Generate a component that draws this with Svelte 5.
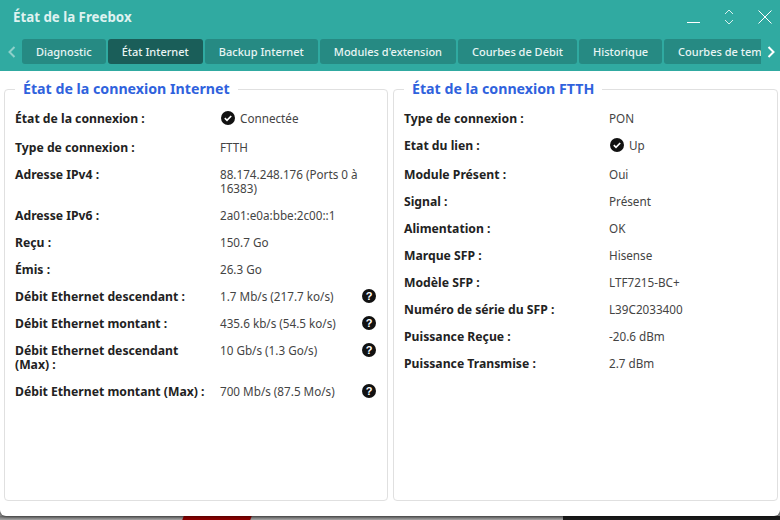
<script>
  const tabs = ['Diagnostic', 'État Internet', 'Backup Internet', "Modules d'extension", 'Courbes de Débit', 'Historique', 'Courbes de température'];
  const left = [
    { k: 'État de la connexion :', v: 'Connectée', check: true },
    { k: 'Type de connexion :', v: 'FTTH' },
    { k: 'Adresse IPv4 :', v: '88.174.248.176 (Ports 0 à 16383)' },
    { k: 'Adresse IPv6 :', v: '2a01:e0a:bbe:2c00::1' },
    { k: 'Reçu :', v: '150.7 Go' },
    { k: 'Émis :', v: '26.3 Go' },
    { k: 'Débit Ethernet descendant :', v: '1.7 Mb/s (217.7 ko/s)', help: true },
    { k: 'Débit Ethernet montant :', v: '435.6 kb/s (54.5 ko/s)', help: true },
    { k: 'Débit Ethernet descendant (Max) :', v: '10 Gb/s (1.3 Go/s)', help: true },
    { k: 'Débit Ethernet montant (Max) :', v: '700 Mb/s (87.5 Mo/s)', help: true }
  ];
  const right = [
    { k: 'Type de connexion :', v: 'PON' },
    { k: 'Etat du lien :', v: 'Up', check: true },
    { k: 'Module Présent :', v: 'Oui' },
    { k: 'Signal :', v: 'Présent' },
    { k: 'Alimentation :', v: 'OK' },
    { k: 'Marque SFP :', v: 'Hisense' },
    { k: 'Modèle SFP :', v: 'LTF7215-BC+' },
    { k: 'Numéro de série du SFP :', v: 'L39C2033400' },
    { k: 'Puissance Reçue :', v: '-20.6 dBm' },
    { k: 'Puissance Transmise :', v: '2.7 dBm' }
  ];
  const panels = [
    { title: 'État de la connexion Internet', rows: left },
    { title: 'État de la connexion FTTH', rows: right }
  ];
</script>

<div class="page">
  <div class="backdrop">
    <span class="red"></span>
    <span class="dark"></span>
  </div>
  <div class="window">
    <header>
      <div class="titlebar">
        <span class="title">État de la Freebox</span>
        <div class="controls">
          <svg width="14" height="14" viewBox="0 0 14 14"><path d="M1 12.5H14" stroke="#fff" fill="none"/></svg>
          <svg width="10" height="16" viewBox="0 0 10 16"><path d="M1 5L5 1L9 5M1 11L5 15L9 11" stroke="#d8f0ee" fill="none"/></svg>
          <svg width="14" height="14" viewBox="0 0 14 14"><path d="M.5 .5L13.5 13.5M13.5 .5L.5 13.5" stroke="#fff" fill="none"/></svg>
        </div>
      </div>
      <div class="tabbar">
        <svg class="arrow" width="8" height="12" viewBox="0 0 8 12"><path d="M6.5 1L1.5 6L6.5 11" stroke="#8fd0ca" stroke-width="2" fill="none"/></svg>
        <div class="tabs">
          {#each tabs as t, i}
            <div class="tab" class:active={i === 1}>{t}</div>
          {/each}
        </div>
        <svg class="arrow" width="8" height="12" viewBox="0 0 8 12"><path d="M1.5 1L6.5 6L1.5 11" stroke="#fff" stroke-width="2" fill="none"/></svg>
      </div>
    </header>
    <main>
      {#each panels as p}
        <fieldset>
          <legend>{p.title}</legend>
          {#each p.rows as r}
            <div class="row" class:tall={r.check}>
              <div class="key">{r.k}</div>
              <div class="val">
                {#if r.check}
                  <svg class="ic" width="14" height="14" viewBox="0 0 14 14"><circle cx="7" cy="7" r="7" fill="#111"/><path d="M3.8 7.2L6 9.3L10.2 5" stroke="#fff" stroke-width="1.7" fill="none"/></svg>
                {/if}
                <span>{r.v}</span>
              </div>
              {#if r.help}
                <svg class="help" width="14" height="14" viewBox="0 0 14 14"><circle cx="7" cy="7" r="7" fill="#111"/><text x="7" y="11" text-anchor="middle" class="q">?</text></svg>
              {/if}
            </div>
          {/each}
        </fieldset>
      {/each}
    </main>
  </div>
</div>

<style>
  :global(body) { margin: 0; background: #8d8d8d; }
  .page {
    position: relative;
    width: 780px;
    height: 520px;
    overflow: hidden;
    font-family: "Noto Sans", "DejaVu Sans", sans-serif;
    font-size: 12px;
    color: #333;
  }
  .backdrop { position: absolute; inset: 0; background: linear-gradient(#6b6b6b, #a8a8a8) 0 516px / 100% 4px no-repeat; }
  .red { position: absolute; left: 183px; top: 516px; width: 68px; height: 4px; background: #8b0000; transform: skewX(-20deg); }
  .dark { position: absolute; left: 563px; top: 516px; width: 217px; height: 4px; background: #1c1c1c; }
  .window {
    position: relative;
    width: 780px;
    height: 516px;
    background: #fff;
    border-radius: 0 0 6px 6px;
    box-shadow: 0 1px 3px rgba(0,0,0,.45);
    display: flex;
    flex-direction: column;
  }
  header { background: #30aaa1; height: 71px; flex: none; }
  .titlebar { height: 39px; display: flex; align-items: center; justify-content: space-between; padding: 0 8px 0 13px; box-sizing: border-box; }
  .title { color: #dff2f0; font-weight: 700; font-size: 13.3px; margin-top: -6px; }
  .controls { display: flex; align-items: center; gap: 24px; margin-top: -6px; }
  .tabbar { display: flex; align-items: center; height: 25px; padding-left: 8px; }
  .tabs { display: flex; gap: 2px; width: 739px; margin: 0 6px; overflow: hidden; flex: none; }
  .tab { flex: none; height: 25px; line-height: 25px; padding: 0 14px; background: #268a83; color: #e9f5f4; border-radius: 3px; font-size: 11px; font-weight: 500; white-space: nowrap; }
  .tab.active { background: #1a5e59; }
  main { flex: 1; display: grid; grid-template-columns: 384px 385px; gap: 5px; padding: 9px 2px 15px 4px; min-height: 0; }
  fieldset { margin: 0; padding: 7px 11px 0 10px; border: 1px solid #e0e0e0; border-radius: 4px; min-width: 0; }
  legend { margin-left: 0; padding: 0 8px; color: #2f62dd; font-weight: 700; font-size: 14.2px; line-height: 18px; }
  .row { display: flex; align-items: flex-start; padding: 6px 0 7px; line-height: 14px; }
  .row.tall { padding-bottom: 9px; }
  .key { width: 205px; flex: none; padding: 1px 10px 0 0; margin-bottom: -1px; box-sizing: border-box; font-weight: 700; font-size: 12.2px; color: #222; }
  .val { flex: 1; display: flex; align-items: flex-start; color: #444; font-size: 11.7px; }
  .ic { flex: none; margin: 0 5px 0 1px; }
  .help { flex: none; margin-left: 4px; }
  .q { fill: #fff; font-size: 11px; font-weight: 700; font-family: "Liberation Sans", sans-serif; }
</style>
